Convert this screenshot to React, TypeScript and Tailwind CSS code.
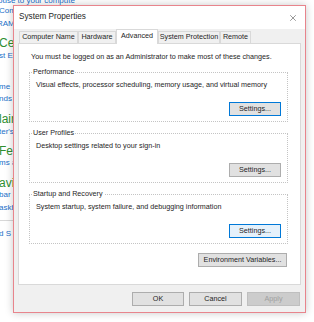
import { X } from "lucide-react";

type Tab = { label: string; width: string; active?: boolean };

const tabs: Tab[] = [
  { label: "Computer Name", width: "w-[59px]" },
  { label: "Hardware", width: "w-[38px]" },
  { label: "Advanced", width: "w-[42px]", active: true },
  { label: "System Protection", width: "w-[62px]" },
  { label: "Remote", width: "w-[31px]" },
];

function WinButton({
  label,
  className = "",
  variant = "normal",
}: {
  label: string;
  className?: string;
  variant?: "normal" | "focus" | "hover" | "disabled";
}) {
  const look =
    variant === "focus"
      ? "border-[#0078d7] bg-[#e1e1e1] text-[#1e1e1e]"
      : variant === "hover"
        ? "border-[#0078d7] bg-[#e5f1fb] text-[#1e1e1e]"
        : variant === "disabled"
          ? "border-[#bfbfbf] bg-[#cccccc] text-[#a0a0a0]"
          : "border-[#adadad] bg-[#e1e1e1] text-[#1e1e1e]";
  return (
    <button
      type="button"
      className={`flex h-[14px] items-center justify-center whitespace-nowrap border text-[7.2px] leading-none ${look} ${className}`}
    >
      {label}
    </button>
  );
}

function GroupBox({
  title,
  text,
  variant,
}: {
  title: string;
  text: string;
  variant: "normal" | "focus" | "hover";
}) {
  return (
    <fieldset className="border border-dotted border-[#c4c4c4] px-[6px] pb-[5px] pt-[3px]">
      <legend className="-ml-[4px] px-[1px] text-[7.2px] leading-[10px] text-[#1e1e1e]">{title}</legend>
      <p className="text-[7.2px] leading-[10px] text-[#1e1e1e]">{text}</p>
      <div className="mt-[12px] flex justify-end">
        <WinButton label="Settings..." variant={variant} className="w-[52px]" />
      </div>
    </fieldset>
  );
}

export default function App() {
  return (
    <div className="relative h-[322px] w-[314px] overflow-hidden bg-white font-['Liberation_Sans',Arial,sans-serif]">
      {/* page behind the dialog */}
      <div className="flex flex-col text-[#1a6fc9]">
        <div className="-ml-[2px] -mt-[4px] h-[10px] whitespace-nowrap text-[8px] leading-[10px]">ouse to your compute</div>
        <div className="-ml-[1px] h-[10px] text-[8px] leading-[10px]">Comput</div>
        <div className="-ml-[3px] mt-[3px] h-[10px] text-[8px] leading-[10px]">RAM i</div>
        <div className="-ml-[1px] mt-[7px] h-[14px] text-[12px] leading-[14px] text-[#2f8f2f]">Cer</div>
        <div className="-ml-[1px] mt-[1px] h-[10px] text-[8px] leading-[10px]">st E</div>
        <div className="-ml-[1px] mt-[21px] h-[10px] text-[8px] leading-[10px]">me</div>
        <div className="-ml-[1px] mt-[2px] h-[10px] text-[8px] leading-[10px]">nds</div>
        <div className="-ml-[1px] mt-[8px] h-[14px] text-[12px] leading-[14px] text-[#2f8f2f]">lain</div>
        <div className="-ml-[1px] mt-[1px] h-[10px] text-[8px] leading-[10px]">ter's</div>
        <div className="-ml-[1px] mt-[7px] h-[14px] text-[12px] leading-[14px] text-[#2f8f2f]">Fea</div>
        <div className="-ml-[1px] h-[10px] text-[8px] leading-[10px]">ms a</div>
        <div className="-ml-[1px] mt-[8px] h-[14px] text-[12px] leading-[14px] text-[#2f8f2f]">avig</div>
        <div className="-ml-[1px] h-[10px] text-[8px] leading-[10px]">bar</div>
        <div className="-ml-[1px] mt-[3px] h-[10px] text-[8px] leading-[10px]">askb</div>
        <div className="mt-[7px] h-px w-[13px] bg-[#d8d8d8]" />
        <div className="-ml-[1px] mt-[8px] h-[10px] text-[8px] leading-[10px]">d S</div>
      </div>

      {/* dialog window */}
      <div className="absolute left-[13px] top-[5px] flex h-[308px] w-[293px] flex-col border border-[#e8848c] bg-[#f0f0f0] shadow-[0_0_8px_rgba(0,0,0,0.22)]">
        <div className="flex h-[23px] items-center justify-between bg-white pl-[5px] pr-[7px]">
          <span className="text-[8.2px] text-[#1e1e1e]">System Properties</span>
          <X size={10} strokeWidth={1.2} className="text-[#333]" />
        </div>

        <div className="flex h-[14px] items-end pl-[5px]">
          {tabs.map((tab) =>
            tab.active ? (
              <div
                key={tab.label}
                className={`relative z-10 -mb-[1px] flex h-[15px] items-center justify-center whitespace-nowrap border border-b-0 border-[#d9d9d9] bg-white pb-[1px] text-[7.2px] text-[#1e1e1e] ${tab.width}`}
              >
                {tab.label}
              </div>
            ) : (
              <div
                key={tab.label}
                className={`flex h-[12px] items-center justify-center whitespace-nowrap border border-b-0 border-[#d9d9d9] bg-[#f0f0f0] text-[7.2px] text-[#1e1e1e] ${tab.width}`}
              >
                {tab.label}
              </div>
            ),
          )}
        </div>

        <div className="mx-[4px] flex h-[242px] flex-col border border-[#d9d9d9] bg-white pl-[10px] pr-[12px] pt-[8px]">
          <p className="pl-[2px] text-[7.2px] leading-[10px] text-[#1e1e1e]">
            You must be logged on as an Administrator to make most of these changes.
          </p>
          <div className="mt-[5px] flex flex-col gap-[6px]">
            <GroupBox
              title="Performance"
              text="Visual effects, processor scheduling, memory usage, and virtual memory"
              variant="focus"
            />
            <GroupBox title="User Profiles" text="Desktop settings related to your sign-in" variant="normal" />
            <GroupBox
              title="Startup and Recovery"
              text="System startup, system failure, and debugging information"
              variant="hover"
            />
          </div>
          <div className="mt-[9px] flex justify-end pr-[1px]">
            <WinButton label="Environment Variables..." className="w-[89px]" />
          </div>
        </div>

        <div className="mt-[7px] flex justify-end gap-[5px] pr-[5px]">
          <WinButton label="OK" className="w-[52px]" />
          <WinButton label="Cancel" className="w-[53px]" />
          <WinButton label="Apply" variant="disabled" className="w-[53px]" />
        </div>
      </div>
    </div>
  );
}
